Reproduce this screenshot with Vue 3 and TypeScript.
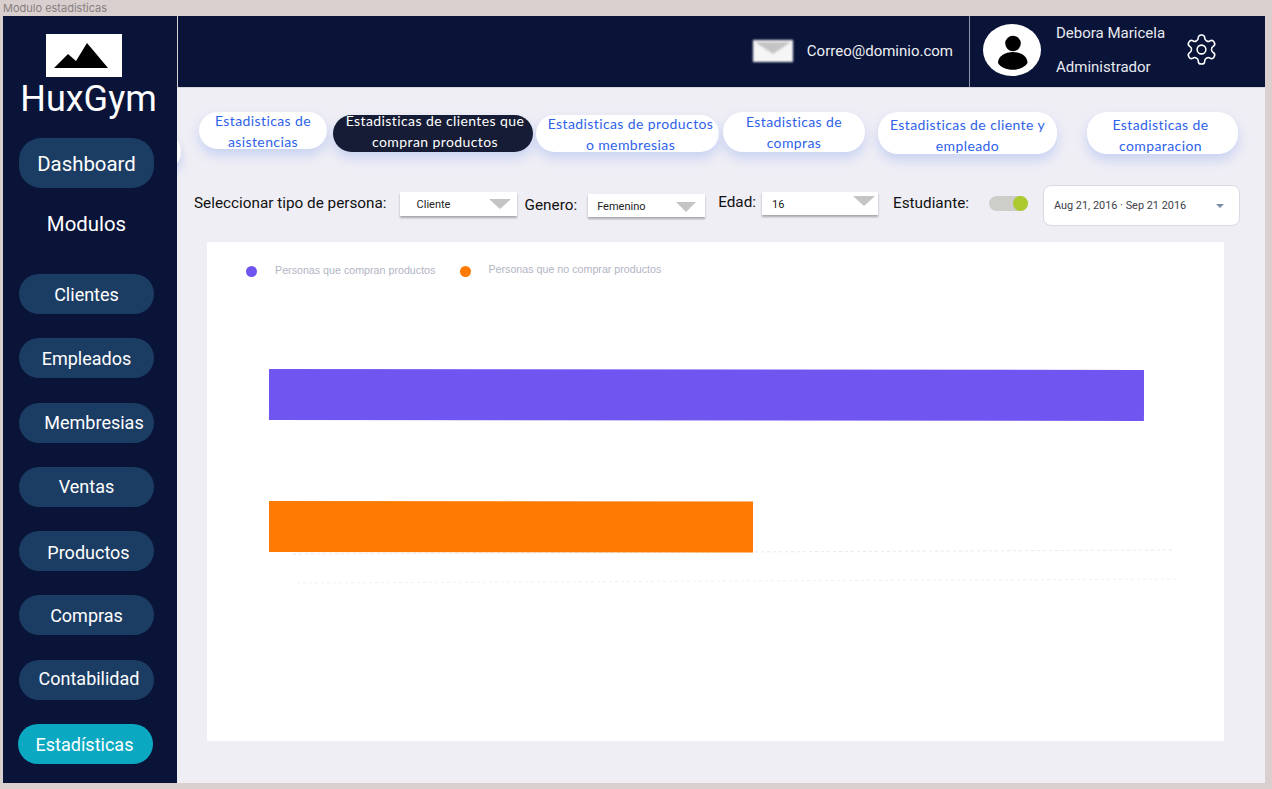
<script setup lang="ts">
const modules = ['Clientes', 'Empleados', 'Membresias', 'Ventas', 'Productos', 'Compras', 'Contabilidad']

const tabs = [
  { label: 'Estadisticas de asistencias', active: false },
  { label: 'Estadisticas de clientes que compran productos', active: true },
  { label: 'Estadisticas de productos o membresias', active: false },
  { label: 'Estadisticas de compras', active: false },
  { label: 'Estadisticas de cliente y empleado', active: false },
  { label: 'Estadisticas de comparacion', active: false },
]

const bars = [
  { name: 'compran', color: '#7155f1', value: 100 },
  { name: 'no compran', color: '#ff7a00', value: 55.3 },
]
</script>

<template>
  <div class="page">
    <div class="frame-title">Modulo estadisticas</div>
    <div class="frame">
      <aside class="sidebar">
        <div class="logo">
          <svg width="76" height="43" viewBox="0 0 76 43">
            <rect width="76" height="43" fill="#fff" />
            <path d="M8 34 L22 20 L30 27 L41 9 L62 34 Z" fill="#000" />
          </svg>
        </div>
        <div class="brand">HuxGym</div>
        <a class="pill pill-big">Dashboard</a>
        <div class="modules-title">Modulos</div>
        <nav class="nav">
          <a v-for="m in modules" :key="m" class="pill" :class="'nav-' + m.toLowerCase()">{{ m }}</a>
          <a class="pill pill-active">Estadísticas</a>
        </nav>
      </aside>

      <div class="main">
        <header class="topbar">
          <div class="mail">
            <svg class="mail-icon" width="42" height="24" viewBox="0 0 42 24">
              <rect x="1" y="1" width="40" height="22" fill="#f6f6f6" />
              <path d="M3 3 L39 3 L21 15 Z" fill="#c4c4c4" />
            </svg>
            <span>Correo@dominio.com</span>
          </div>
          <div class="user">
            <svg class="avatar" width="58" height="52" viewBox="0 0 58 52">
              <ellipse cx="29" cy="26" rx="29" ry="26" fill="#fff" />
              <circle cx="30" cy="19.5" r="7.8" fill="#000" />
              <path d="M15 39 C15 32 22 28 30 28 C38 28 44.5 32 44.5 39 C39 48 20 48 15 39 Z" fill="#000" />
            </svg>
            <div class="user-text">
              <span>Debora Maricela</span>
              <span>Administrador</span>
            </div>
            <svg class="gear" width="35" height="35" viewBox="0 0 24 24" fill="none" stroke="#fff" stroke-width="1.05" stroke-linecap="round" stroke-linejoin="round">
              <path d="M12.22 2h-.44a2 2 0 0 0-2 2v.18a2 2 0 0 1-1 1.73l-.43.25a2 2 0 0 1-2 0l-.15-.08a2 2 0 0 0-2.73.73l-.22.38a2 2 0 0 0 .73 2.73l.15.1a2 2 0 0 1 1 1.72v.51a2 2 0 0 1-1 1.74l-.15.09a2 2 0 0 0-.73 2.73l.22.38a2 2 0 0 0 2.73.73l.15-.08a2 2 0 0 1 2 0l.43.25a2 2 0 0 1 1 1.73V20a2 2 0 0 0 2 2h.44a2 2 0 0 0 2-2v-.18a2 2 0 0 1 1-1.73l.43-.25a2 2 0 0 1 2 0l.15.08a2 2 0 0 0 2.73-.73l.22-.39a2 2 0 0 0-.73-2.73l-.15-.08a2 2 0 0 1-1-1.74v-.5a2 2 0 0 1 1-1.74l.15-.09a2 2 0 0 0 .73-2.73l-.22-.38a2 2 0 0 0-2.73-.73l-.15.08a2 2 0 0 1-2 0l-.43-.25a2 2 0 0 1-1-1.73V4a2 2 0 0 0-2-2z" />
              <circle cx="12" cy="12" r="3" />
            </svg>
          </div>
        </header>

        <div class="content">
          <span class="peek"></span>
          <div class="tabs">
            <button v-for="t in tabs" :key="t.label" class="tab" :class="{ active: t.active }">{{ t.label }}</button>
          </div>

          <div class="filters">
            <label class="f-label">Seleccionar tipo de persona:</label>
            <div class="select s1"><span>Cliente</span><i class="caret"></i></div>
            <label class="f-label l2">Genero:</label>
            <div class="select s2"><span>Femenino</span><i class="caret"></i></div>
            <label class="f-label l3">Edad:</label>
            <div class="select s3"><span>16</span><i class="caret"></i></div>
            <label class="f-label l4">Estudiante:</label>
            <div class="toggle"><i></i></div>
            <div class="date">
              <span>Aug 21, 2016 · Sep 21 2016</span>
              <i class="date-caret"></i>
            </div>
          </div>

          <section class="chart">
            <div class="legend">
              <div class="legend-item"><i class="dot-a"></i><span>Personas que compran productos</span></div>
              <div class="legend-item second"><i class="dot-b"></i><span>Personas que no comprar productos</span></div>
            </div>
            <div class="plot">
              <div v-for="b in bars" :key="b.name" class="bar" :style="{ width: b.value + '%', background: b.color }"></div>
              <svg class="grid" width="900" height="50" viewBox="0 0 900 50" fill="none" stroke="#e9e9ee" stroke-dasharray="3 3">
                <path d="M0 19 L880 15" />
                <path d="M4 48 L885 44" stroke="#f1f1f4" />
              </svg>
            </div>
          </section>
        </div>
      </div>
    </div>
  </div>
</template>

<style>
html, body { margin: 0; background: #dacfcf; }
</style>

<style scoped>
* { box-sizing: border-box; }

.page {
  width: 1272px;
  height: 789px;
  overflow: hidden;
  font-family: Roboto, sans-serif;
  background: #dacfcf;
  padding: 0 7px 6px 3px;
  display: flex;
  flex-direction: column;
}

.frame-title {
  height: 16px;
  font-family: Inter, sans-serif;
  font-size: 11px;
  line-height: 16px;
  color: #85807f;
}

.frame {
  flex: 1;
  display: flex;
  min-height: 0;
}

.sidebar {
  width: 174px;
  flex: none;
  background: #0a1439;
  color: #fff;
  display: flex;
  flex-direction: column;
  padding-top: 18px;
  padding-left: 16px;
  position: relative;
  z-index: 2;
}

.logo {
  height: 43px;
  margin-left: 27px;
  line-height: 0;
}

.brand {
  width: 139px;
  text-align: center;
  font-size: 36px;
  line-height: 44px;
}

.pill {
  display: flex;
  align-items: center;
  justify-content: center;
  width: 135px;
  height: 40px;
  border-radius: 20px;
  background: #1c3d63;
  color: #fff;
  font-size: 18px;
}

.pill-big {
  height: 50px;
  margin-top: 17px;
  padding-top: 2px;
  border-radius: 22px;
  font-size: 20.4px;
}

.modules-title {
  width: 135px;
  margin-top: 22px;
  height: 28px;
  line-height: 28px;
  text-align: center;
  font-size: 20.4px;
}

.nav {
  margin-top: 36px;
  display: flex;
  flex-direction: column;
  gap: 24.3px;
}

.nav-membresias { padding-left: 15px; }
.nav-productos { padding: 3px 0 0 4px; }
.nav-contabilidad { padding: 0 0 3px 5px; }

.pill-active {
  background: #0ba9c1;
  margin-left: -1px;
  padding-right: 2px;
}

.main {
  flex: 1;
  display: flex;
  flex-direction: column;
  min-width: 0;
}

.topbar {
  height: 72px;
  margin-left: 1px;
  background: #0a1439;
  color: #fff;
  display: flex;
  justify-content: flex-end;
  flex: none;
  border-bottom: 1px solid #d5d6de;
}

.mail {
  display: flex;
  align-items: center;
  gap: 13px;
  font-size: 15px;
  color: #eef0f4;
  padding-bottom: 2px;
  margin-right: 16px;
}

.mail-icon { filter: blur(.8px); }

.user {
  width: 296px;
  border-left: 1px solid #8f94a6;
  display: flex;
  align-items: center;
  padding-left: 13px;
}

.avatar { margin-bottom: 3px; }

.user-text {
  display: flex;
  flex-direction: column;
  gap: 16px;
  font-size: 15px;
  line-height: 18px;
  color: #e8eaf0;
  margin-left: 15px;
  width: 131px;
  padding-bottom: 4px;
}

.gear { margin-bottom: 5px; margin-left: -3px; }

.content {
  flex: 1;
  background: #efeef5;
  padding: 24px 0 0 18px;
  position: relative;
}

.peek {
  position: absolute;
  left: -12px;
  top: 50px;
  width: 16px;
  height: 27px;
  border-radius: 50%;
  background: #fff;
  box-shadow: 0 6px 10px rgba(80, 120, 230, .25);
}

.tabs {
  display: flex;
  align-items: flex-start;
  height: 73px;
}

.tab {
  display: flex;
  align-items: center;
  justify-content: center;
  height: 38px;
  border: 0;
  border-radius: 20px;
  background: #fff;
  color: #2e62ea;
  font-family: Lato, sans-serif;
  font-size: 14px;
  line-height: 21px;
  letter-spacing: .4px;
  padding: 0;
  text-align: center;
  box-shadow: 0 6px 12px rgba(76, 120, 235, .24);
  flex: none;
}

.tab.active {
  background: #161c35;
  color: #fff;
}

.tab:nth-child(1) { width: 128px; height: 37px; margin-left: 4px; padding: 2px 0 2px; }
.tab:nth-child(2) { width: 200px; height: 37px; margin: 3px 0 0 6px; padding: 0 6px 6px 10px; }
.tab:nth-child(3) { width: 183px; height: 37px; margin: 3px 0 0 3px; padding: 2px 2px 2px 8px; }
.tab:nth-child(4) { width: 142px; margin: 0 0 0 4px; height: 40px; padding: 1px 20px 2px; }
.tab:nth-child(5) { width: 179px; margin: 0 0 0 13px; height: 42px; padding: 5px 8px 2px; }
.tab:nth-child(6) { width: 151px; margin: 0 0 0 30px; height: 42px; padding: 5px 23px 2px 19px; }

.filters {
  display: flex;
  align-items: flex-start;
  height: 57px;
  margin-left: -1px;
}

.f-label {
  font-size: 15.3px;
  line-height: 18px;
  margin-top: 9px;
  color: #111;
  white-space: nowrap;
}

.select {
  width: 117px;
  height: 24px;
  margin-top: 7px;
  background: #fff;
  box-shadow: 0 2px 2px rgba(0, 0, 0, .3);
  display: flex;
  align-items: center;
  justify-content: space-between;
  font-size: 11px;
  color: #222;
}

.s1 { margin-left: 13px; padding: 0 6px 0 17px; }
.l2 { margin-left: 8px; margin-top: 11px; }
.s2 { margin-left: 11px; margin-top: 9px; padding: 2px 9px 0 9px; height: 23px; }
.l3 { margin-left: 13px; margin-top: 8px; }
.s3 { margin-left: 6px; height: 23px; padding: 1px 3px 0 10px; width: 116px; }
.l4 { margin-left: 15px; margin-top: 9px; }

.caret {
  width: 0;
  height: 0;
  border-left: 11px solid transparent;
  border-right: 11px solid transparent;
  border-top: 10px solid #c4c4c4;
}

.s2 .caret {
  border-left-width: 10px;
  border-right-width: 10px;
}

.s3 .caret { margin-top: -7px; }

.toggle {
  width: 39px;
  height: 15px;
  margin: 11px 0 0 20px;
  border-radius: 8px;
  background: #cdcdc9;
  display: flex;
  justify-content: flex-end;
}

.toggle i {
  width: 15px;
  height: 15px;
  border-radius: 50%;
  background: #acc92f;
}

.date {
  width: 197px;
  height: 41px;
  margin: 0 0 0 15px;
  background: #fff;
  border: 1px solid #d9dae2;
  border-radius: 8px;
  display: flex;
  align-items: center;
  justify-content: space-between;
  padding: 0 15px 0 10px;
  font-size: 10.9px;
  color: #3d4048;
}

.date-caret {
  width: 0;
  height: 0;
  border-left: 4px solid transparent;
  border-right: 4px solid transparent;
  border-top: 4px solid #7a8ca0;
}

.chart {
  width: 1017px;
  height: 499px;
  margin-left: 12px;
  background: #fff;
  padding: 0 62px;
}

.legend {
  display: flex;
  height: 127px;
  padding: 22px 0 0 0;
  margin-left: -23px;
  font-family: "Liberation Sans", sans-serif;
  font-size: 10.7px;
  color: #b3b5c4;
}

.legend-item {
  display: flex;
  align-items: flex-start;
  gap: 18px;
  line-height: 12px;
}

.legend-item i {
  width: 11px;
  height: 11px;
  border-radius: 50%;
  margin-top: 2px;
  flex: none;
}

.dot-a { background: #7155f1; }
.dot-b { background: #ff7a00; }

.legend-item.second {
  margin-left: 25px;
  gap: 17px;
}

.legend-item.second span { margin-top: -1px; }

.plot {
  position: relative;
  width: 875px;
  display: flex;
  flex-direction: column;
  gap: 81px;
}

.bar {
  height: 51px;
  position: relative;
  z-index: 1;
  transform: rotate(.06deg);
  transform-origin: left center;
}

.grid {
  position: absolute;
  left: 24px;
  top: 166px;
}
</style>
